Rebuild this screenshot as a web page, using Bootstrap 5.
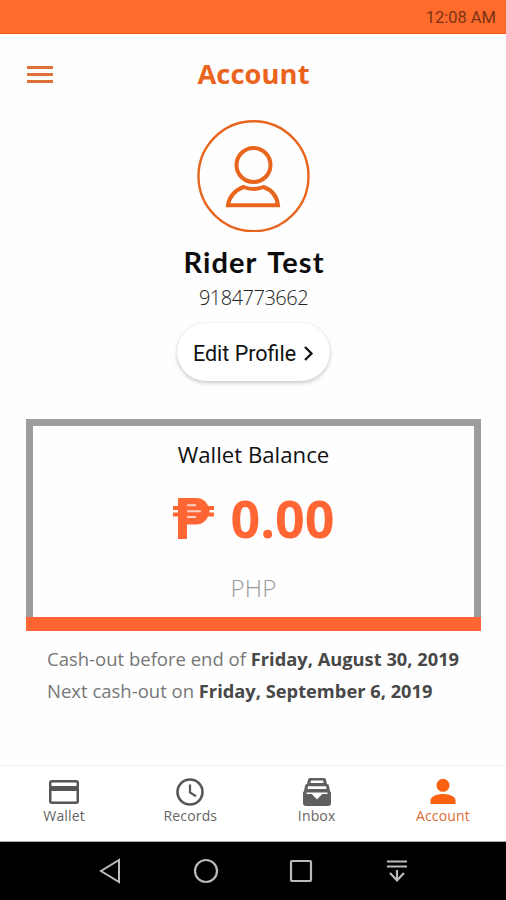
<!DOCTYPE html>
<html lang="en">
<head>
<meta charset="utf-8">
<meta name="viewport" content="width=device-width, initial-scale=1">
<title>Account</title>
<link href="https://cdn.jsdelivr.net/npm/bootstrap@5.3.0/dist/css/bootstrap.min.css" rel="stylesheet">
<style>
body{font-family:"Open Sans",sans-serif;background:#fefefe;color:#111}
.screen{width:506px;height:900px;overflow:hidden}
.screen svg{display:block;flex:none}
.status{height:34px;background:#ff6b2c;border-bottom:1px solid #f25a10;font:16.5px/34px Roboto,sans-serif;color:#7c3216;padding:1px 10px 0 0}
.topbar{height:86px;padding:0 25px 6px 26px}
.topbar h1{font-size:27.3px;font-weight:700;letter-spacing:.1px;color:#ea6420;line-height:36px}
.side{width:27px}
.rider{font:700 29px/36px Lato,sans-serif;margin-top:12px;letter-spacing:1.1px;word-spacing:3px;padding-left:2px;color:#0c0c0c}
.phone{font:300 20px/28px "Open Sans",sans-serif;margin-top:4px;letter-spacing:-.5px;padding-left:1px;color:#222}
.edit{width:153px;height:58px;margin-top:11px;border-radius:29px;background:#fff;box-shadow:0 2px 4px rgba(0,0,0,.2),0 0 2px rgba(0,0,0,.08);font:21.5px/1 Roboto,sans-serif;color:#111;border:0;padding:3px 0 0 2px}
.edit svg{margin:0 0 1px 7px}
.balance{margin:38px 25px 0 26px;height:212px;border:7px solid #9d9d9d;border-bottom:0}
.balance-in{height:191px;padding-top:14px}
.balance-bar{height:14px;margin:0 -7px;background:#ff6634}
.wb{font-size:22.2px;line-height:30px}
.amount{font-size:52px;line-height:60px;font-weight:700;color:#ff6634;margin-top:18px}
.php{font-size:24px;line-height:30px;font-weight:300;color:#999;letter-spacing:.2px;margin-top:25px}
.notes{padding:12px 0 0 47px;font-size:18.500px;line-height:31.5px;color:#777}
.notes b{color:#484848;font-weight:700;font-size:18.300px}
.tabs{height:77px;border-top:1px solid #f1f1f1;border-bottom:1px solid #aaa;background:#fff;padding-left:1px}
.tabs a{color:#666;text-decoration:none;font-size:14px;line-height:18px;padding-top:11px;letter-spacing:.15px}
.tabs a.on{color:#dc6a34}
.sys{height:58px;background:#000;padding-left:96px}
.sys svg{margin-right:67.5px}
</style>
<script src="https://cdn.jsdelivr.net/npm/bootstrap@5.3.0/dist/js/bootstrap.bundle.min.js"></script>
</head>
<body>
<div class="screen d-flex flex-column">
  <div class="status text-end">12:08 AM</div>
  <header class="topbar d-flex align-items-center justify-content-between">
    <svg class="side" width="27" height="20" viewBox="0 0 27 20" fill="#dc7038"><path d="M1 2h26v3H1zm0 7h26v3H1zm0 7h26v3H1z"/></svg>
    <h1 class="m-0">Account</h1>
    <span class="side"></span>
  </header>
  <main class="flex-grow-1">
    <section class="d-flex flex-column align-items-center">
      <svg width="114" height="112" viewBox="0 0 114 112" fill="none" stroke="#e8651e"><circle cx="57.500" cy="56.300" r="55" stroke-width="2.4"/><g stroke-width="4"><circle cx="57.500" cy="45" r="17"/><path d="M47.500 67C39 70 33 77 32 85.200h50C81 77 76 70 67.500 67Q57.500 71 47.500 67Z"/></g></svg>
      <h2 class="rider mb-0">Rider Test</h2>
      <div class="phone">9184773662</div>
      <button class="edit d-flex align-items-center justify-content-center" type="button">Edit Profile
        <svg width="12" height="18" viewBox="0 0 12 18" fill="none" stroke="#111" stroke-width="2.300"><path d="M2 3l6.500 6.500L2 16"/></svg></button>
    </section>
    <section class="balance">
      <div class="balance-in d-flex flex-column align-items-center">
        <div class="wb">Wallet Balance</div>
        <div class="amount d-flex align-items-center">
          <svg width="42" height="42" viewBox="0 0 42 42"><path fill="#ff6634" fill-rule="evenodd" d="M6 1h18C30 1 34.500 4 36 9H42v4h-4.500v2.500H42v4h-6C34 24 30 27.500 24 27.500H15V42H6V19.500H1v-4h5V13H1V9h5Z"/><path stroke="#fff" stroke-width="2" opacity=".7" d="M15 8.300h9M15 14.200h14M15 20.100h9"/></svg>
          <span class="ms-3">0.00</span>
        </div>
        <div class="php">PHP</div>
      </div>
      <div class="balance-bar"></div>
    </section>
    <section class="notes text-nowrap">
      <div>Cash-out before end of <b>Friday, August 30, 2019</b></div>
      <div>Next cash-out on <b>Friday, September 6, 2019</b></div>
    </section>
  </main>
  <nav class="tabs row g-0 text-center">
    <a class="col d-flex flex-column align-items-center" href="#"><svg width="32" height="30" viewBox="0 0 32 30"><path fill="#555" fill-rule="evenodd" d="M4 3h24a3 3 0 0 1 3 3v18a3 3 0 0 1-3 3H4a3 3 0 0 1-3-3V6a3 3 0 0 1 3-3Zm-.5 2.500V9h25V5.500ZM3.500 14v10.500h25V14Z"/></svg><span>Wallet</span></a>
    <a class="col d-flex flex-column align-items-center" href="#"><svg width="32" height="30" viewBox="0 0 32 30" fill="none" stroke="#555" stroke-width="2.600"><circle cx="16" cy="15" r="12.500"/><path d="M16 7.500v8l6 3.700" stroke-width="2.200"/></svg><span>Records</span></a>
    <a class="col d-flex flex-column align-items-center" href="#"><svg width="32" height="30" viewBox="0 0 32 30" fill="#5f5f5f" fill-rule="evenodd"><path d="M9 1h14a2 2 0 0 1 2 2l1 4a2 2 0 0 1 2 2l1 5a3 3 0 0 1 1 2v10a3 3 0 0 1-3 3H5a3 3 0 0 1-3-3V16a3 3 0 0 1 1-2l1-5a2 2 0 0 1 2-2l1-4a2 2 0 0 1 2-2ZM10 3.500 9.500 6h13L22 3.500ZM7 9.200 6.500 12h19L25 9.200ZM5.500 15.500v1.500H11c1 2 3 2.500 5 5.500 2-3 4-3.500 5-5.500h5.500v-1.500Z"/></svg><span>Inbox</span></a>
    <a class="col on d-flex flex-column align-items-center" href="#"><svg width="32" height="30" viewBox="0 0 32 30" fill="#fa6110"><circle cx="16" cy="8.300" r="6.500"/><path d="M3.500 27v-3.500C3.500 19 11 17 16 17s12.500 2 12.500 6.500V27Z"/></svg><span>Account</span></a>
  </nav>
  <footer class="sys d-flex align-items-center">
    <svg width="28" height="28" viewBox="0 0 28 28" fill="none" stroke="#bbb" stroke-width="2"><path d="M23 3v22L5 14Z"/></svg>
    <svg width="28" height="28" viewBox="0 0 28 28" fill="none" stroke="#bbb" stroke-width="2.200"><circle cx="14" cy="14" r="11"/></svg>
    <svg width="28" height="28" viewBox="0 0 28 28" fill="none" stroke="#bbb" stroke-width="2.200"><rect x="4" y="4" width="20" height="20" rx="1"/></svg>
    <svg width="28" height="28" viewBox="0 0 28 28" fill="none" stroke="#bbb" stroke-width="2.200"><path d="M4 4.500h20M4 9.500h20M14 13v10M7 16l7 7.500 7-7.500"/></svg>
  </footer>
</div>
</body>
</html>
